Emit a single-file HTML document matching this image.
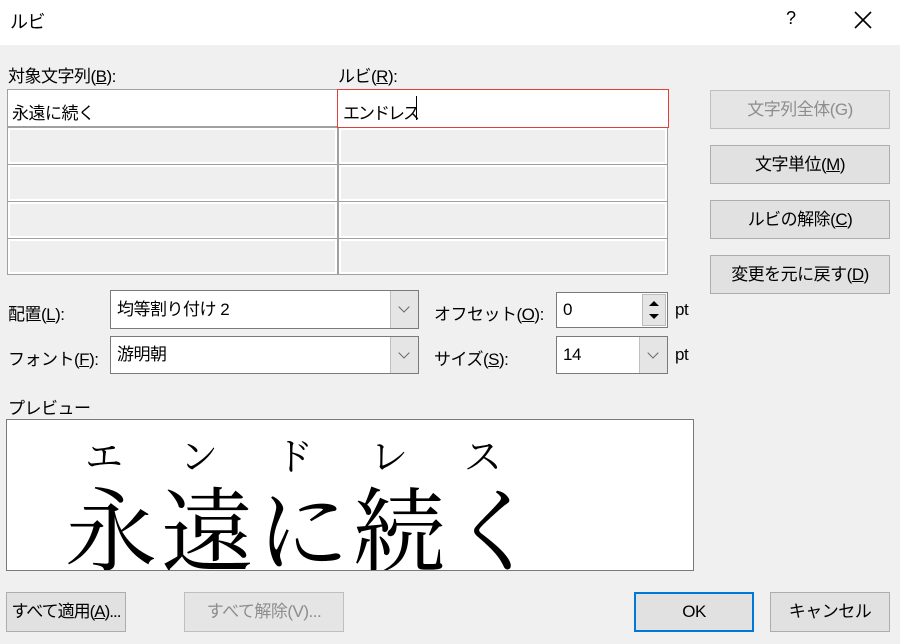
<!DOCTYPE html>
<html><head><meta charset="utf-8"><style>
*{box-sizing:border-box;margin:0;padding:0}
body{width:900px;height:644px;background:#f0f0f0;position:relative;overflow:hidden;font-family:"Liberation Sans","Noto Sans CJK JP",sans-serif;font-size:17px;color:#000;letter-spacing:-0.5px}
.a{position:absolute;white-space:nowrap}
.title{left:0;top:0;width:900px;height:45px;background:#fff}
.btn{position:absolute;background:#e1e1e1;border:1px solid #adadad;text-align:center;font-size:17px;white-space:nowrap}
.dis{color:#8d8d8d;border-color:#bfbfbf;background:#e5e5e5}
.cell{position:absolute;border:1px solid #a0a0a0;box-shadow:inset 0 0 0 2px #fff;background:#efefef}
.in{position:absolute;background:#fff;border:1px solid #7a7a7a;padding-left:6px;white-space:nowrap}
.dd{position:absolute;right:0;top:0;bottom:0;width:28px;background:#e5e5e5;border-left:1px solid #c0c0c0}
.dd:after{content:"";position:absolute;left:9px;top:12px;width:7px;height:7px;border-right:1px solid #666;border-bottom:1px solid #666;transform:rotate(45deg)}
u{text-decoration:underline}
.serif{font-family:"Liberation Serif","Noto Serif CJK JP",serif;letter-spacing:0}
</style></head><body>
<div class="a title"></div>
<div class="a" style="left:10px;top:8px;font-size:18px">ルビ</div>
<div class="a" style="left:786px;top:8px;font-size:18px">?</div>
<svg class="a" style="left:853px;top:10px" width="20" height="20"><path d="M2 2L18 18M18 2L2 18" stroke="#000" stroke-width="1.6"/></svg>

<div class="a" style="left:8px;top:62px">対象文字列(<u>B</u>):</div>
<div class="a" style="left:338px;top:62px">ルビ(<u>R</u>):</div>

<div class="cell" style="left:7px;top:89px;width:331px;height:38px;background:#fff;box-shadow:none"></div>
<div class="a" style="left:12px;top:99px">永遠に続く</div>
<div class="cell" style="left:7px;top:127px;width:331px;height:38px"></div>
<div class="cell" style="left:7px;top:164px;width:331px;height:38px"></div>
<div class="cell" style="left:7px;top:201px;width:331px;height:38px"></div>
<div class="cell" style="left:7px;top:238px;width:331px;height:37px"></div>
<div class="cell" style="left:338px;top:127px;width:330px;height:38px"></div>
<div class="cell" style="left:338px;top:164px;width:330px;height:38px"></div>
<div class="cell" style="left:338px;top:201px;width:330px;height:38px"></div>
<div class="cell" style="left:338px;top:238px;width:330px;height:37px"></div>
<div class="a" style="left:337px;top:89px;width:332px;height:39px;border:1px solid #e0403a;background:#fff;z-index:2"></div>
<div class="a" style="left:343px;top:99px;z-index:3;letter-spacing:-2px">エンドレス</div>
<div class="a" style="left:416px;top:96px;width:1px;height:24px;background:#000;z-index:3"></div>

<div class="btn dis" style="left:710px;top:90px;width:180px;height:39px;line-height:37px">文字列全体(G)</div>
<div class="btn" style="left:710px;top:145px;width:180px;height:39px;line-height:37px">文字単位(<u>M</u>)</div>
<div class="btn" style="left:710px;top:200px;width:180px;height:39px;line-height:37px">ルビの解除(<u>C</u>)</div>
<div class="btn" style="left:710px;top:255px;width:180px;height:39px;line-height:37px">変更を元に戻す(<u>D</u>)</div>

<div class="a" style="left:8px;top:300px">配置(<u>L</u>):</div>
<div class="in" style="left:110px;top:290px;width:309px;height:39px;line-height:37px">均等割り付け 2<div class="dd"></div></div>
<div class="a" style="left:8px;top:345px">フォント(<u>F</u>):</div>
<div class="in" style="left:110px;top:336px;width:309px;height:38px;line-height:36px">游明朝<div class="dd"></div></div>

<div class="a" style="left:434px;top:300px">オフセット(<u>O</u>):</div>
<div class="in" style="left:556px;top:292px;width:112px;height:36px;line-height:34px">0
<div class="a" style="right:1px;top:1px;width:24px;height:32px;background:#e5e5e5;border:1px solid #bbb"></div>
<div class="a" style="right:8px;top:8px;width:0;height:0;border-left:5px solid transparent;border-right:5px solid transparent;border-bottom:5px solid #000"></div>
<div class="a" style="right:8px;top:21px;width:0;height:0;border-left:5px solid transparent;border-right:5px solid transparent;border-top:5px solid #000"></div>
</div>
<div class="a" style="left:675px;top:300px">pt</div>
<div class="a" style="left:434px;top:345px">サイズ(<u>S</u>):</div>
<div class="in" style="left:556px;top:336px;width:112px;height:38px;line-height:36px">14<div class="dd"></div></div>
<div class="a" style="left:675px;top:345px">pt</div>

<div class="a" style="left:8px;top:394px">プレビュー</div>
<div class="a" style="left:6px;top:419px;width:688px;height:152px;background:#fff;border:1px solid #7a7a7a;overflow:hidden">
<div class="a serif" style="left:78px;top:8px;font-size:38px;letter-spacing:57px;line-height:60px">エンドレス</div>
<div class="a serif" style="left:58px;top:58px;font-size:92px;letter-spacing:4px;line-height:110px">永遠に続く</div>
</div>

<div class="btn" style="left:6px;top:592px;width:120px;height:40px;line-height:38px;letter-spacing:-1px">すべて適用(<u>A</u>)...</div>
<div class="btn dis" style="left:184px;top:592px;width:160px;height:40px;line-height:38px">すべて解除(V)...</div>
<div class="btn" style="left:634px;top:592px;width:120px;height:40px;line-height:36px;border:2px solid #0078d7">OK</div>
<div class="btn" style="left:770px;top:592px;width:120px;height:40px;line-height:38px">キャンセル</div>
</body></html>
